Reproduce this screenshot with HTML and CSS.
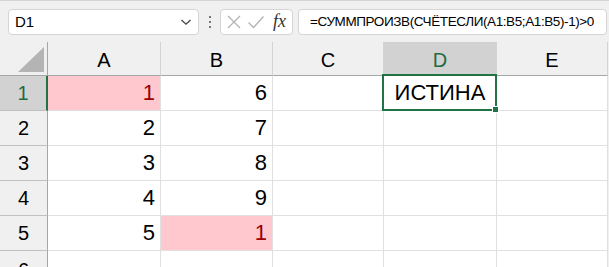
FILE: index.html
```html
<!DOCTYPE html>
<html>
<head>
<meta charset="utf-8">
<link rel="stylesheet" href="styles.css">
</head>
<body>
<div class="toolbar">
  <div class="namebox">
    <span class="name">D1</span>
    <svg class="chev" width="12" height="8" viewBox="0 0 12 8"><path d="M1.5 2 L6 6.2 L10.5 2" fill="none" stroke="#444" stroke-width="1.3"/></svg>
  </div>
  <div class="dots"><span></span><span></span><span></span></div>
  <div class="fxbox">
    <svg width="16" height="16" viewBox="0 0 16 16"><path d="M2 2 L14 14 M14 2 L2 14" stroke="#b3b3b3" stroke-width="1.3" fill="none"/></svg>
    <svg width="18" height="16" viewBox="0 0 18 16"><path d="M1.5 8.5 L6.5 13.5 L16.5 2.5" stroke="#b3b3b3" stroke-width="1.3" fill="none"/></svg>
    <span class="fx">fx</span>
  </div>
  <div class="formula">=СУММПРОИЗВ(СЧЁТЕСЛИ(A1:B5;A1:B5)-1)&gt;0</div>
</div>
<div class="sheet">
  <div class="corner"><div class="tri"></div></div>
  <div class="ch">A</div>
  <div class="ch">B</div>
  <div class="ch">C</div>
  <div class="ch sel">D</div>
  <div class="ch">E</div>

  <div class="rh sel">1</div>
  <div class="c num bad">1</div>
  <div class="c num">6</div>
  <div class="c"></div>
  <div class="c ctr active">ИСТИНА</div>
  <div class="c"></div>

  <div class="rh">2</div>
  <div class="c num">2</div>
  <div class="c num">7</div>
  <div class="c"></div><div class="c"></div><div class="c"></div>

  <div class="rh">3</div>
  <div class="c num">3</div>
  <div class="c num">8</div>
  <div class="c"></div><div class="c"></div><div class="c"></div>

  <div class="rh">4</div>
  <div class="c num">4</div>
  <div class="c num">9</div>
  <div class="c"></div><div class="c"></div><div class="c"></div>

  <div class="rh">5</div>
  <div class="c num">5</div>
  <div class="c num bad">1</div>
  <div class="c"></div><div class="c"></div><div class="c"></div>

  <div class="rh last">6</div>
  <div class="c"></div><div class="c"></div><div class="c"></div><div class="c"></div><div class="c"></div>
</div>
</body>
</html>
```
FILE: styles.css
```css
html, body {
  margin: 0;
  padding: 0;
  background: #f0f0f0;
  overflow: hidden;
  width: 609px;
  height: 267px;
}
body {
  font-family: "Liberation Sans", Arial, sans-serif;
  color: #000;
}
.toolbar {
  height: 42px;
  box-sizing: border-box;
  border-top: 1px solid #d4d4d4;
  display: flex;
  align-items: center;
  padding-left: 8px;
}
.namebox {
  width: 191px;
  height: 26px;
  box-sizing: border-box;
  background: #fff;
  border: 1px solid #d5d5d5;
  border-radius: 4px;
  display: flex;
  align-items: center;
  justify-content: space-between;
  padding: 0 6px 0 6px;
}
.name {
  font-size: 15px;
  font-family: "Liberation Sans", sans-serif;
}
.dots {
  width: 21px;
  display: flex;
  flex-direction: column;
  align-items: center;
  gap: 3px;
}
.dots span {
  width: 2px;
  height: 2px;
  background: #777;
}
.fxbox {
  width: 73px;
  height: 26px;
  box-sizing: border-box;
  background: #fff;
  border: 1px solid #d5d5d5;
  border-radius: 4px;
  display: flex;
  align-items: center;
  padding: 0 5px 0 5px;
  gap: 5px;
}
.fx {
  font-family: "Liberation Serif", serif;
  font-style: italic;
  font-size: 18px;
  color: #333;
  margin-left: 3px;
}
.formula {
  margin-left: 5px;
  width: 309px;
  height: 26px;
  box-sizing: border-box;
  background: #fff;
  border: 1px solid #d5d5d5;
  border-radius: 4px;
  font-size: 13.5px;
  letter-spacing: -0.4px;
  display: flex;
  align-items: center;
  padding-left: 11px;
  white-space: nowrap;
  overflow: hidden;
}
.sheet {
  display: grid;
  grid-template-columns: 48px 113px 112px 111px 113px 111px;
  grid-template-rows: 34px 35px 35px 35px 35px 35px 17px;
  width: 608px;
  height: 225px;
  overflow: hidden;
}
.corner {
  border-right: 1px solid #a6a6a6;
  border-bottom: 1px solid #a6a6a6;
  display: flex;
  justify-content: flex-end;
  align-items: flex-end;
  padding: 0 3px 3px 0;
}
.tri {
  width: 26px;
  height: 25px;
  background: #b4b4b4;
  clip-path: polygon(100% 0, 100% 100%, 0 100%);
}
.ch {
  border-right: 1px solid #d4d4d4;
  border-bottom: 1px solid #a6a6a6;
  display: flex;
  align-items: center;
  justify-content: center;
  font-size: 20px;
  padding-top: 3px;
  box-sizing: border-box;
}
.ch.sel {
  background: #d2d2d2;
  color: #1f6b43;
}
.rh {
  border-right: 1px solid #a6a6a6;
  border-bottom: 1px solid #c0c0c0;
  display: flex;
  align-items: center;
  justify-content: center;
  font-size: 20px;
  box-sizing: border-box;
}
.rh.last {
  align-items: flex-start;
  padding-top: 9px;
  border-bottom: 0;
  overflow: hidden;
  line-height: 20px;
}
.rh.sel {
  background: #d2d2d2;
  color: #1f6b43;
  border-right: 2px solid #217346;
}
.c {
  background: #fff;
  border-right: 1px solid #e0e0e0;
  border-bottom: 1px solid #e0e0e0;
  display: flex;
  align-items: center;
  font-size: 22px;
  box-sizing: border-box;
  position: relative;
}
.num {
  justify-content: flex-end;
  padding-right: 5px;
}
.ctr {
  justify-content: center;
}
.bad {
  background: #ffc7ce;
  color: #9c0006;
}
.active::after {
  content: "";
  position: absolute;
  left: -2px;
  top: -2px;
  right: -1px;
  bottom: -1px;
  border: 2px solid #217346;
}
.active::before {
  content: "";
  position: absolute;
  right: -3px;
  bottom: -3px;
  width: 5px;
  height: 5px;
  background: #217346;
  border: 1px solid #fff;
  z-index: 2;
}
```
